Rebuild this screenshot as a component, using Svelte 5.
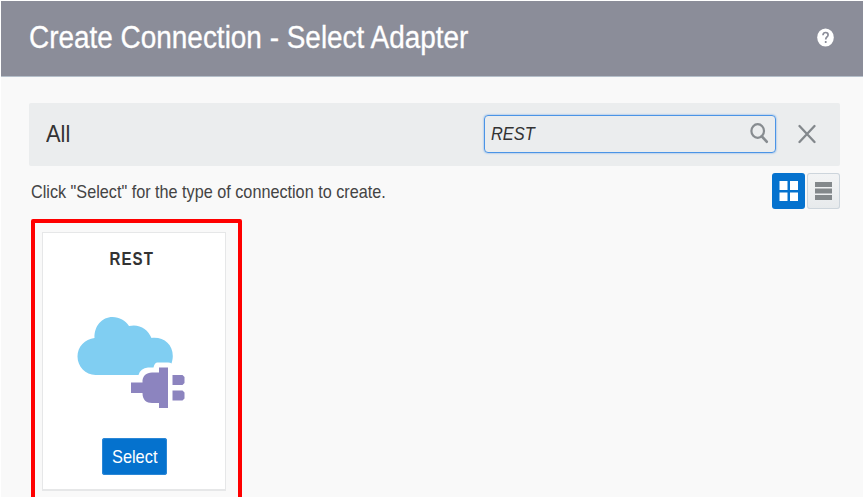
<script>
  let query = $state('REST');
</script>

<div class="page">
  <header>
    <h1><span class="t title">Create Connection - Select Adapter</span></h1>
    <svg class="help" width="17" height="19" viewBox="0 0 17 19">
      <ellipse cx="8.5" cy="9.5" rx="8.3" ry="9.1" fill="#fff" />
      <path d="M6 7.2C6 5.4 7.1 4.5 8.6 4.5S11.1 5.4 11.1 6.9C11.1 9 8.7 9 8.7 11.5M8.7 13.1V15" fill="none" stroke="#8b8d99" stroke-width="1.7" />
    </svg>
  </header>

  <main>
    <div class="bar">
      <h2><span class="t all">All</span></h2>
      <div class="search">
        <span class="t query">{query}</span>
        <svg width="19" height="21" viewBox="0 0 19 21" fill="none" stroke="#878c90">
          <ellipse cx="7.7" cy="8" rx="6.3" ry="6.8" stroke-width="2.2" />
          <path d="M11.8 13.3L16.7 18.7" stroke-width="2.7" stroke-linecap="round" />
        </svg>
      </div>
      <svg class="close" width="18" height="20" viewBox="0 0 18 20">
        <path d="M1.5 2L16.5 18M16.5 2L1.5 18" stroke="#83888c" stroke-width="2.3" stroke-linecap="round" />
      </svg>
    </div>

    <div class="tools">
      <p><span class="t hint">Click "Select" for the type of connection to create.</span></p>
      <div class="views">
        <button class="view active" aria-label="Grid view">
          <svg width="33" height="36" viewBox="0 0 33 36" fill="#fff">
            <path d="M7.500 8h8v9h-8zM18 8h8v9h-8zM7.500 19.500h8v8.500h-8zM18 19.500h8v8.500h-8z" />
          </svg>
        </button>
        <button class="view" aria-label="List view">
          <svg width="33" height="36" viewBox="0 0 33 36" fill="#83888b">
            <path d="M8 9h17v5H8zM8 15.500h17v5H8zM8 22h17v5H8z" />
          </svg>
        </button>
      </div>
    </div>

    <div class="highlight">
      <div class="card">
        <h3><span class="t name">REST</span></h3>
        <svg class="art" width="110" height="95" viewBox="0 0 110 95">
          <path d="M18.500 61C8.500 61 .5 52.500 .5 42.500C.5 32.500 8 25 17.500 24C17 12 25 3 35.500 3C42.500 3 48.500 6.500 52 12C62 9.500 71 15 74.500 24C86 22.500 95.800 30 95.800 42C95.800 45 95 47.500 94.500 49.500Q93.500 48.500 91 48.500H80Q77.500 49 76.500 53.500H71Q63.500 54 61.500 61Z" fill="#80cef2" />
          <path d="M54 68.500H65.500C65 62 69.500 58.500 75 58.500H82V53.500H91V94H82V89H75C69.500 89 65.500 86 65.500 79H54Z" fill="#8c84bf" />
          <path d="M95.500 61H105.500L107.500 63V69L105.500 71H95.500ZM95.500 76.500H105.500L107.500 78.500V84.500L105.500 86.500H95.500Z" fill="#8c84bf" />
        </svg>
        <button class="select"><span class="t label">Select</span></button>
      </div>
    </div>
  </main>
</div>

<style>
  :global(body) { margin: 0; background: #fff; overflow: hidden; }
  * { box-sizing: border-box; }
  .page {
    width: 863px; height: 497px; overflow: hidden;
    padding: 1px 0 0 1px; background: #fff;
    font-family: "Liberation Sans", Arial, sans-serif; color: #333;
  }
  header {
    height: 76px; display: flex; align-items: center; justify-content: space-between;
    padding: 0 29px 2px 28px; background: #8b8d99; border-bottom: 1px solid #b5bfca;
  }
  h1, h2, h3, p { margin: 0; font-weight: 400; }
  .t { display: inline-block; white-space: nowrap; transform-origin: 0 50%; }
  h1 { font-size: 31px; line-height: 34px; color: #fff; -webkit-text-stroke: .3px #fff; }
  .title { transform: scaleX(.901); }
  .help { display: block; }
  main { height: 420px; padding: 26px 23px 0 28px; background: #f9f9f9; }
  .bar {
    height: 63px; display: flex; align-items: center; padding: 0 24px 1px 17px;
    background: #ebedee; border-radius: 2px;
  }
  h2 { flex: 1; font-size: 24px; line-height: 28px; }
  .all { transform: scaleX(.91); }
  .search {
    width: 292px; height: 38px; display: flex; align-items: center; justify-content: space-between;
    padding: 0 6px 0 6px; border: 1px solid #4b94e6; border-radius: 4px;
    box-shadow: 0 0 2px #5b9ee8; font-size: 18.500px; font-style: italic;
  }
  .search svg { margin-bottom: 2px; }
  .query { transform: scaleX(.885); }
  .close { margin-left: 22px; }
  .tools { height: 53px; display: flex; justify-content: space-between; padding: 7px 0 0 2px; }
  p { font-size: 18.500px; line-height: 22px; padding-top: 8px; color: #444; }
  .hint { transform: scaleX(.876); }
  .views { display: flex; gap: 2px; }
  button { display: block; border: 0; padding: 0; font-family: inherit; }
  .view {
    width: 33px; height: 36px; border-radius: 3px;
    background: linear-gradient(#f3f4f5, #e7eaec); box-shadow: inset 0 0 0 1px #cdd5dc;
  }
  .view.active { background: #0572ce; box-shadow: none; }
  .view svg { display: block; }
  .highlight {
    width: 211px; height: 300px; margin-left: 2px; padding: 9px 0 0 7px;
    border: 4px solid #f00; border-radius: 2px;
  }
  .card {
    width: 184px; height: 259px; display: flex; flex-direction: column; align-items: center;
    padding-top: 15px; background: #fff; border: 1px solid #e6e7e8; border-bottom-width: 2px;
  }
  h3 { font-size: 17.500px; line-height: 22px; height: 44px; font-weight: 700; }
  .name { letter-spacing: 1.200px; transform: scaleX(.86); transform-origin: 50% 50%; margin-left: -4px; }
  .art { display: block; margin: 22px 0 0 -4px; flex: none; }
  .select {
    width: 65px; height: 37px; margin: 29px 0 0 1px; border-radius: 3px; flex: none;
    background: #0572ce; color: #fff; font-size: 18.500px; box-shadow: inset 0 0 0 1px #2b87d6;
  }
  .label { transform: scaleX(.885); transform-origin: 50% 50%; margin: 0 -4px; }
</style>
